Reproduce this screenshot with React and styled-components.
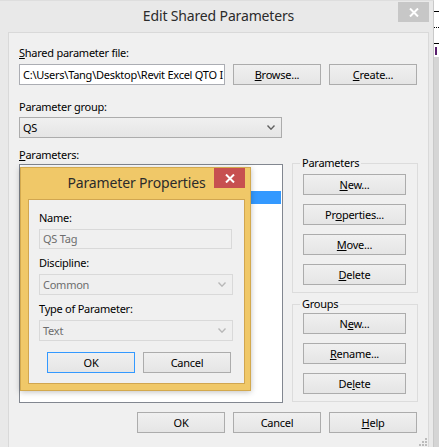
import React from 'react'
import styled, { createGlobalStyle } from 'styled-components'

const GlobalStyle = createGlobalStyle`
  html, body { margin: 0; padding: 0; background: #d5d5d5; }
  body {
    font-family: "Noto Sans", "Open Sans", sans-serif;
    font-size: 11px;
    letter-spacing: -0.25px;
    color: #000;
  }
  * { box-sizing: border-box; }
`

const Screen = styled.div`
  display: flex;
  width: 439px;
  height: 447px;
  overflow: hidden;
`

const Window = styled.div`
  width: 434px;
  height: 447px;
  flex-shrink: 0;
  display: flex;
  flex-direction: column;
  background: #e9e9e9;
  border-top: 1px solid #dedede;
  border-right: 1px solid #c9c9c9;
  padding: 0 4px 0 8px;
`

const TitleBar = styled.div`
  height: 31px;
  display: grid;
  grid-template-columns: 1fr auto 1fr;
  align-items: start;
`

const Title = styled.div`
  grid-column: 2;
  font-size: 14px;
  letter-spacing: -0.15px;
  line-height: 30px;
  color: #2b2b2b;
  white-space: nowrap;
`

const CloseBtn = styled.div`
  grid-column: 3;
  justify-self: end;
  width: 31px;
  height: 20px;
  margin-top: ${p => p.$top || 0}px;
  background: ${p => p.$active ? '#c75050' : '#c7c7c7'};
  display: flex;
  align-items: center;
  justify-content: center;
`

const Client = styled.div`
  position: relative;
  flex: 1;
  background: #f0f0f0;
  border: 1px solid #d9d9d9;
  border-bottom: none;
  padding: 12px 11px 0 10px;
`

const Label = styled.div`
  line-height: 16px;
  height: 16px;
  margin-top: ${p => p.$top || 0}px;
  white-space: nowrap;
`

const Row = styled.div`
  display: flex;
  gap: 8px;
  margin-top: ${p => p.$top || 0}px;
  justify-content: ${p => p.$end ? 'flex-end' : 'flex-start'};
  padding-left: ${p => p.$indent || 0}px;
`

const TextBox = styled.div`
  width: ${p => p.$w}px;
  height: ${p => p.$h || 21}px;
  flex-shrink: 0;
  border: 1px solid ${p => p.$disabled ? '#d9d9d9' : '#abadb3'};
  background: ${p => p.$disabled ? '#f0f0f0' : '#fff'};
  color: ${p => p.$disabled ? '#6d6d6d' : '#000'};
  padding: 0 3px;
  line-height: ${p => (p.$h || 21) - 2}px;
  white-space: nowrap;
  overflow: hidden;
  margin-top: ${p => p.$top || 0}px;
`

const Combo = styled.div`
  width: ${p => p.$w}px;
  height: 21px;
  margin-top: ${p => p.$top || 0}px;
  border: 1px solid ${p => p.$disabled ? '#d9d9d9' : '#acacac'};
  background: ${p => p.$disabled ? '#efefef' : 'linear-gradient(#f0f0f0, #e5e5e5)'};
  color: ${p => p.$disabled ? '#6d6d6d' : '#000'};
  display: flex;
  align-items: center;
  justify-content: space-between;
  padding: 0 6px 0 3px;
`

const Button = styled.div`
  width: ${p => p.$w || 88}px;
  height: 21px;
  flex-shrink: 0;
  border: 1px solid ${p => p.$default ? '#3399ff' : '#acacac'};
  background: linear-gradient(#f0f0f0, #e5e5e5);
  display: flex;
  align-items: center;
  justify-content: center;
  white-space: nowrap;
  line-height: 19px;
`

const Main = styled.div`
  display: flex;
  gap: 9px;
  margin-top: 1px;
  width: 399px;
`

const ListWrap = styled.div`
  position: relative;
  width: 264px;
  height: 239px;
  flex-shrink: 0;
  border: 1px solid #828790;
  background: #fff;
`

const ListItem = styled.div`
  height: 13px;
  line-height: 13px;
  padding-left: 3px;
  margin-right: 1px;
  background: ${p => p.$selected ? '#3399ff' : 'transparent'};
  color: ${p => p.$selected ? '#fff' : '#000'};
`

const Side = styled.div`
  width: 126px;
  flex-shrink: 0;
  display: flex;
  flex-direction: column;
  gap: 11px;
  margin-top: -1px;
`

const GroupBox = styled.div`
  border: 1px solid #dcdcdc;
  padding: 0 11px 7px 10px;
`

const Legend = styled.div`
  width: fit-content;
  margin: -9px 0 ${p => p.$gap || 0}px -3px;
  padding: 0 2px;
  line-height: 16px;
  background: #f0f0f0;
`

const ButtonStack = styled.div`
  display: flex;
  flex-direction: column;
  gap: 9px;
`

const Dialog = styled.div`
  position: absolute;
  left: 0;
  top: 2px;
  width: 231px;
  height: 224px;
  display: flex;
  flex-direction: column;
  background: #f0c868;
  border: 1px solid #d3a94e;
  box-shadow: 0 1px 6px rgba(0, 0, 0, 0.25);
  padding: 0 5px 6px 7px;
`

const DialogClient = styled.div`
  flex: 1;
  background: #f0f0f0;
  border: 1px solid #d1a650;
  padding: 10px 10px 0 10px;
`

const Grip = styled.svg`
  position: absolute;
  right: 1px;
  bottom: 1px;
`

const BackApp = styled.div`
  flex: 1;
  display: flex;
  flex-direction: column;
`

const BackTop = styled.div`
  height: 57px;
  background: #fff;
  display: flex;
  flex-direction: column;
`

const BackLine = styled.div`
  height: 1px;
  margin-top: ${p => p.$top}px;
  border-top: 1px ${p => p.$dotted ? 'dotted' : 'solid'} #000;
`

const BackMark = styled.div`
  width: 2px;
  height: 8px;
  margin: 3px 0 0 1px;
  background: #5a1f6e;
`

const Chevron = ({ color }) => (
  <svg width="8" height="5" viewBox="0 0 8 5">
    <polyline points="0.5,0.6 4,4.2 7.5,0.6" fill="none" stroke={color} strokeWidth="1.4" />
  </svg>
)

const Cross = () => (
  <svg width="10" height="9" viewBox="0 0 10 9">
    <path d="M1 0.5 L9 8.5 M9 0.5 L1 8.5" stroke="#fff" strokeWidth="2" />
  </svg>
)

export default function App() {
  return (
    <>
      <GlobalStyle />
      <Screen>
        <Window>
          <TitleBar>
            <Title>Edit Shared Parameters</Title>
            <CloseBtn $top={1}><Cross /></CloseBtn>
          </TitleBar>
          <Client>
            <Label><u>S</u>hared parameter file:</Label>
            <Row $top={3}>
              <TextBox $w={206}>C:\Users\Tang\Desktop\Revit Excel QTO I</TextBox>
              <Button><span><u>B</u>rowse...</span></Button>
              <Button><span><u>C</u>reate...</span></Button>
            </Row>
            <Label $top={14}>Parameter <u>g</u>roup:</Label>
            <Combo $w={263} $top={2}>
              <span>QS</span>
              <Chevron color="#606060" />
            </Combo>
            <Label $top={9}><u>P</u>arameters:</Label>
            <Main>
              <ListWrap>
                <ListItem>QS</ListItem>
                <ListItem>&nbsp;&nbsp;QS Code</ListItem>
                <ListItem $selected>&nbsp;&nbsp;QS Tag</ListItem>
                <Dialog>
                  <TitleBar>
                    <Title>Parameter Properties</Title>
                    <CloseBtn $active><Cross /></CloseBtn>
                  </TitleBar>
                  <DialogClient>
                    <Label>Name:</Label>
                    <TextBox $w={193} $h={20} $top={3} $disabled>QS Tag</TextBox>
                    <Label $top={6}>Discipline:</Label>
                    <Combo $w={194} $top={3} $disabled>
                      <span>Common</span>
                      <Chevron color="#b8b8b8" />
                    </Combo>
                    <Label $top={6}>Type of Parameter:</Label>
                    <Combo $w={194} $top={3} $disabled>
                      <span>Text</span>
                      <Chevron color="#b8b8b8" />
                    </Combo>
                    <Row $top={11} $indent={8}>
                      <Button $default>OK</Button>
                      <Button>Cancel</Button>
                    </Row>
                  </DialogClient>
                </Dialog>
              </ListWrap>
              <Side>
                <GroupBox>
                  <Legend $gap={3}>Parameters</Legend>
                  <ButtonStack>
                    <Button $w={103}><span><u>N</u>ew...</span></Button>
                    <Button $w={103}><span>Pr<u>o</u>perties...</span></Button>
                    <Button $w={103}><span><u>M</u>ove...</span></Button>
                    <Button $w={103}><span><u>D</u>elete</span></Button>
                  </ButtonStack>
                </GroupBox>
                <GroupBox>
                  <Legend $gap={1}>Groups</Legend>
                  <ButtonStack>
                    <Button $w={103}><span>N<u>e</u>w...</span></Button>
                    <Button $w={103}><span><u>R</u>ename...</span></Button>
                    <Button $w={103}><span>De<u>l</u>ete</span></Button>
                  </ButtonStack>
                </GroupBox>
              </Side>
            </Main>
            <Row $top={9} $end>
              <Button>OK</Button>
              <Button>Cancel</Button>
              <Button><span><u>H</u>elp</span></Button>
            </Row>
            <Grip width="8" height="8" viewBox="0 0 8 8">
              <g fill="#bcbcbc">
                <rect x="6" y="0" width="2" height="2" />
                <rect x="3" y="3" width="2" height="2" />
                <rect x="6" y="3" width="2" height="2" />
                <rect x="0" y="6" width="2" height="2" />
                <rect x="3" y="6" width="2" height="2" />
                <rect x="6" y="6" width="2" height="2" />
              </g>
            </Grip>
          </Client>
        </Window>
        <BackApp>
          <BackTop>
            <BackLine $top={11} />
            <BackLine $top={15} $dotted />
            <BackLine $top={15} />
            <BackMark />
          </BackTop>
        </BackApp>
      </Screen>
    </>
  )
}
